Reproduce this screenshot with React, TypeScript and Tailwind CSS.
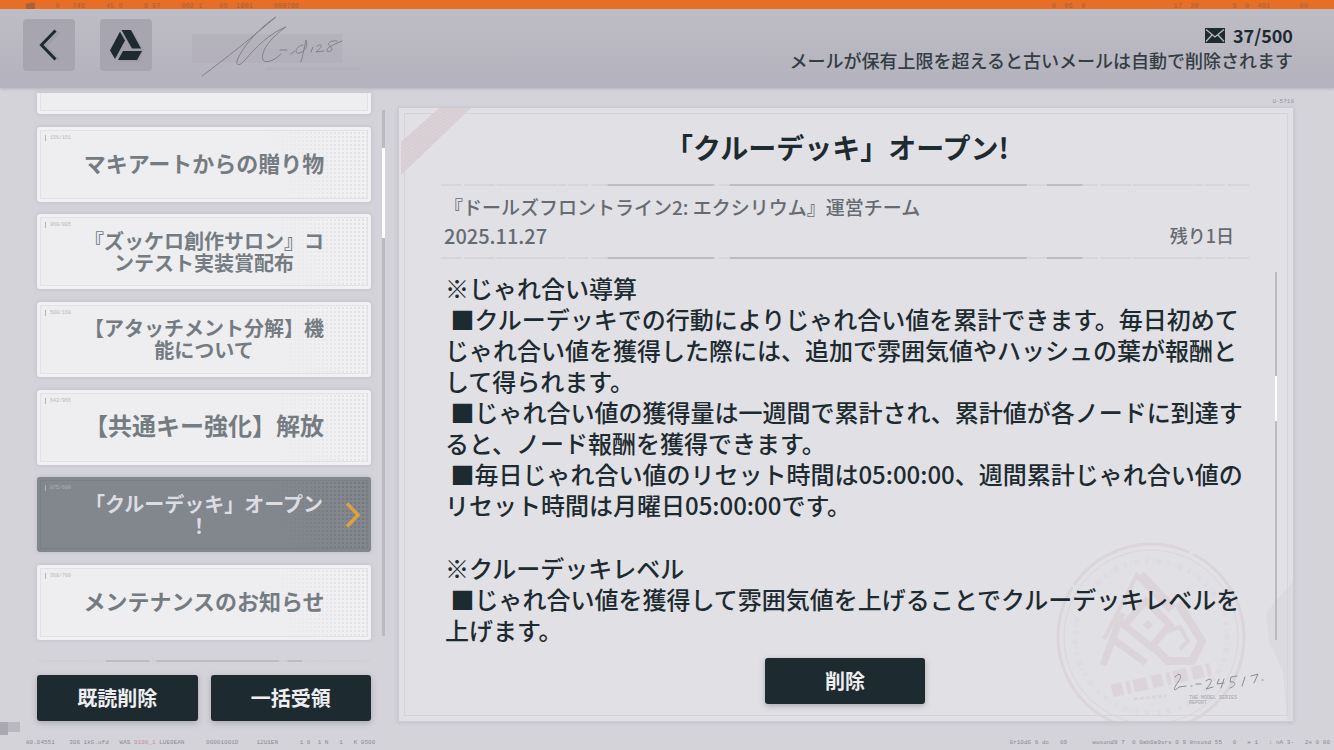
import React from 'react';
import { clsx } from 'clsx';

const SC = "font-['Noto_Sans_CJK_SC',sans-serif]";

const mails = [
  { code: '156/151', title: 'マキアートからの贈り物', size: 'text-[22px] pb-1' },
  { code: '960/005', title: '『ズッケロ創作サロン』コンテスト実装賞配布', size: 'text-[20px]' },
  { code: '500/168', title: '【アタッチメント分解】機能について', size: 'text-[20px]' },
  { code: '642/966', title: '【共通キー強化】解放', size: 'text-[24px] pb-1' },
  { code: '875/600', title: <>「クルーデッキ」オープン<span className={SC}>！</span></>, size: 'text-[20px]', active: true },
  { code: '360/700', title: 'メンテナンスのお知らせ', size: 'text-[22px] pb-1' },
];

const sections = [
  [
    '※じゃれ合い導算',
    ' ■クルーデッキでの行動によりじゃれ合い値を累計できます。毎日初めてじゃれ合い値を獲得した際には、追加で雰囲気値やハッシュの葉が報酬として得られます。',
    ' ■じゃれ合い値の獲得量は一週間で累計され、累計値が各ノードに到達すると、ノード報酬を獲得できます。',
    ' ■毎日じゃれ合い値のリセット時間は05:00:00、週間累計じゃれ合い値のリセット時間は月曜日05:00:00です。',
  ],
  [
    '※クルーデッキレベル',
    ' ■じゃれ合い値を獲得して雰囲気値を上げることでクルーデッキレベルを上げます。',
  ],
];

function BackIcon() {
  return (
    <svg viewBox="0 0 52 52" className="h-full w-full" fill="none">
      <path d="M36 13 23 27 36 41" stroke="#8f8e98" strokeWidth="3" opacity=".35" />
      <path d="M32.500 11.500 18.500 26 32.500 40.500" stroke="#1d2b30" strokeWidth="3" />
    </svg>
  );
}

function BaseIcon() {
  return (
    <svg viewBox="0 0 52 52" className="h-full w-full">
      <path d="M24 13H33L44 31 39 43H20L13 33Z" fill="#8f8e98" opacity=".35" />
      <g fill="#1d2b30">
        <path d="M21.500 11H31L41 29.500H32Z" />
        <path d="M20 12.500 25 21.500 15 40 10 31.500Z" />
        <path d="M23 32H42L37 41H18Z" />
      </g>
    </svg>
  );
}

function MailIcon() {
  return (
    <svg viewBox="0 0 20 15" className="h-[15px] w-5">
      <rect width="20" height="15" fill="#1d2b30" />
      <path d="M1 1.500 10 9 19 1.500M1 13.500 7 7M19 13.500 13 7" fill="none" stroke="#bbb9c3" strokeWidth="1.300" />
    </svg>
  );
}

function HeaderSignature() {
  return (
    <svg viewBox="0 0 170 80" className="h-20 w-[170px]" fill="none" stroke="#82818b" strokeWidth="1" strokeLinecap="round">
      <rect x="2" y="25" width="150" height="29" fill="#a9a7b1" stroke="none" opacity=".35" />
      <path d="M77 60H170" stroke="#a9a7b1" strokeWidth="3" opacity=".35" />
      <path d="M12 67C34 51 66 25 86 8C67 20 50 42 47 52C46 58 51 56 55 51C66 38 80 24 96 18C80 29 70 43 73 51C77 56 87 49 91 45" />
      <path d="M90 41 97 41M101 45 105 42M113 36C105 37 104 46 110 44C116 42 118 35 116 31C114 40 112 50 111 53M123 38 121 43M127 37C132 34 134 37 126 43L134 42M147 32C140 31 136 35 140 37C144 40 141 44 137 42C135 39 145 35 152 32" />
    </svg>
  );
}

function Stamp() {
  return (
    <svg viewBox="0 0 210 190" className="absolute right-[35px] -bottom-1 h-[190px] w-[210px]" fill="none">
      <g stroke="#dbd5da">
        <circle cx="103" cy="102" r="93" strokeWidth="3" strokeDasharray="130 4 210 3" />
        <circle cx="103" cy="102" r="87" strokeWidth="1" />
        <circle cx="103" cy="102" r="76" strokeWidth="5" strokeDasharray="3 4 1 3 5 6" opacity=".35" />
        <path d="M90 38 56 104" strokeWidth="4" />
        <path d="M92 40 124 74" strokeWidth="10" />
        <path d="M74 78 55 130M62 102 98 128" strokeWidth="7" />
        <path d="M98 66 122 90 103 112 76 90Z" strokeWidth="7" />
        <path d="M130 68 154 106 144 126 120 126 106 112" strokeWidth="8" />
        <path d="M120 96 132 92 140 106 132 114" strokeWidth="4" />
      </g>
      <path d="M95 90 100 85 105 90 100 95Z" fill="#dbd5da" />
      <path d="M64 156 164 134" stroke="#dbd5da" strokeWidth="13" strokeDasharray="11 4 4 3 14 5" />
      <path d="M86 164 118 161" stroke="#dbd5da" strokeWidth="3" strokeDasharray="4 2" />
    </svg>
  );
}

function ReportSignature() {
  return (
    <svg viewBox="0 0 96 24" className="h-6 w-24" fill="none" stroke="#8c8b93" strokeWidth="1" strokeLinecap="round">
      <path d="M4 6C9 0 12 5 7 11C2 18 2 22 8 16L15 15M20 15H21M25 13H30M35 10C41 5 43 10 35 18L42 16M48 8 46 13 53 12M53 8 50 17M66 5 60 6 59 11C66 10 65 15 59 17M74 6 71 15M80 5 87 3 83 12M91 9H92" />
    </svg>
  );
}

// worn hairline: the same uneven dashes are used above and below the sender
function Rule({ className }: { className?: string }) {
  return (
    <svg viewBox="0 0 800 2" preserveAspectRatio="none" className={clsx('block h-[2px] w-full shrink-0', className)}>
      <path d="M0 1H800" stroke="#cbcad0" strokeWidth="1" strokeDasharray="20 3 30 2 60 1 8 2" />
      <path d="M165 1H270M286 1H580M600 1H635" stroke="#bdbcc3" strokeWidth="2" />
    </svg>
  );
}

function Micro({ children, className }: { children: React.ReactNode; className?: string }) {
  return (
    <span className={clsx("font-['Liberation_Mono',monospace] whitespace-pre", className)}>{children}</span>
  );
}

function CardTexture({ active }: { active?: boolean }) {
  return (
    <span
      className={clsx(
        'absolute inset-[3px] border [background-size:100%_100%,4px_4px]',
        active
          ? 'border-[#7b7f86] bg-[linear-gradient(75deg,#82868d_70%,transparent),radial-gradient(#72767c_0.8px,transparent_1px)]'
          : 'border-[#e2e2e6] bg-[linear-gradient(75deg,#eeeef1_70%,transparent),radial-gradient(#e0e0e3_0.8px,transparent_1px)]'
      )}
    />
  );
}

function MailCard({ mail }: { mail: (typeof mails)[number] }) {
  return (
    <li className="h-[75px] shrink-0">
      <button
        type="button"
        aria-current={mail.active}
        className={clsx(
          'relative flex h-full w-full items-center justify-center rounded-[3px] shadow-[0_0_5px_#bcbbc3]',
          mail.active ? 'bg-[#82868d] text-[#dcdde1]' : 'bg-[#f1f1f3] text-[#757c81]'
        )}
      >
        <CardTexture active={mail.active} />
        <Micro className="absolute top-2 left-2 border-l border-current pl-1 text-[5px] leading-[6px] opacity-50">{mail.code}</Micro>
        <span className={clsx('relative w-[244px] text-center leading-[22px] font-bold [line-break:anywhere]', mail.size)}>
          {mail.title}
        </span>
        {mail.active && (
          <svg viewBox="0 0 16 26" className="absolute right-[10px] h-[26px] w-4" fill="none">
            <path d="M2 1.500 13 13 2 24.500" stroke="#e0a040" strokeWidth="3.500" />
          </svg>
        )}
      </button>
    </li>
  );
}

function DarkButton({ children, className }: { children: React.ReactNode; className?: string }) {
  return (
    <button
      type="button"
      className={clsx('h-[46px] shrink-0 rounded-[3px] bg-[#1d2b30] text-[20px] font-bold text-[#eeeef1] shadow-[0_2px_6px_#a9a8b0]', className)}
    >
      {children}
    </button>
  );
}

export default function App() {
  return (
    <div className="relative flex min-h-screen flex-col bg-[#d4d3da] font-['Noto_Sans_CJK_JP',sans-serif] font-medium text-[#1d2b30]">
      <header className="bg-linear-to-b from-[#bfbdc6] to-[#b4b2bc] shadow-[0_1px_3px_#b4b2bc]">
        <div className="flex h-[9px] justify-between overflow-hidden bg-[#e66e26] px-[26px] text-[7px] leading-[12px] text-[#b05f30]">
          <Micro>{'▆▇     0   746     45 0     9 57     002 1    06  1901     000760'}</Micro>
          <Micro>{'0  06  0                     17  20        9  0  401       00'}</Micro>
        </div>
        <div className="flex h-[79px] items-start justify-between pr-[41px] pl-[23px]">
          <div className="flex">
            <button type="button" aria-label="戻る" className="mt-[10px] h-[52px] w-[52px] rounded-[4px] bg-[#a7a5af]">
              <BackIcon />
            </button>
            <button type="button" aria-label="拠点" className="mt-[10px] ml-[25px] h-[52px] w-[52px] rounded-[4px] bg-[#a7a5af]">
              <BaseIcon />
            </button>
            <div className="ml-[38px]">
              <HeaderSignature />
            </div>
          </div>
          <div className="pt-[13px] text-right">
            <p className="flex items-center justify-end gap-2 text-[18px] leading-[26px] font-bold">
              <MailIcon />
              37/500
            </p>
            <p className="text-[18px] leading-[24px] text-[#343d44]">メールが保有上限を超えると古いメールは自動で削除されます</p>
          </div>
        </div>
      </header>

      <main className="flex flex-1 pr-10 pl-[37px]">
        <nav className="flex w-[334px] flex-col pt-[5px] pb-px">
          <ul className="flex flex-1 flex-col justify-between">
            <li className="relative h-[21px] rounded-b-[3px] bg-[#f1f1f3] shadow-[0_0_5px_#bcbbc3]">
              <span className="absolute inset-x-[3px] top-0 bottom-[3px] border border-t-0 border-[#e2e2e6] bg-[#eeeef1]" />
            </li>
            {mails.map((m) => (
              <MailCard key={m.code} mail={m} />
            ))}
          </ul>
          <Rule className="mt-5" />
          <div className="mt-[13px] grid grid-cols-2 gap-[13px]">
            <DarkButton>既読削除</DarkButton>
            <DarkButton>一括受領</DarkButton>
          </div>
        </nav>

        <div className="mt-[22px] mb-[86px] ml-[11px] w-[3px] bg-[#bbbac1]">
          <div className="mt-[38px] h-[90px] bg-white" />
        </div>

        <div className="ml-[13px] flex min-w-0 flex-1 flex-col">
          <Micro className="h-[19px] pt-[10px] text-right text-[6px] leading-[7px] text-[#96959d]">U-5710</Micro>
          <article className="relative flex flex-1 flex-col overflow-hidden border border-[#cccbd1] bg-[#e1e0e5] pr-[44px] pl-[42px] shadow-[0_1px_4px_#c0bfc6]">
            <div className="pointer-events-none absolute inset-[5px] border border-[#d4d3d9]" />
            <svg viewBox="0 0 80 70" className="absolute top-0 left-0 h-[70px] w-20">
              <defs>
                <pattern id="tape" width="3" height="3" patternUnits="userSpaceOnUse" patternTransform="rotate(-28)">
                  <rect width="3" height="3" fill="#dbd4d9" />
                  <path d="M0 1H3" stroke="#d3c6cc" strokeWidth="1" />
                </pattern>
              </defs>
              <path d="M40 0H72L2 67V34Z" fill="url(#tape)" />
            </svg>
            <svg viewBox="0 0 30 140" className="absolute right-0 bottom-0 h-[140px] w-[30px]">
              <path d="M30 0 3 32 6 60 20 90 24 140H30Z" fill="#d6d5da" opacity=".6" />
            </svg>
            <Stamp />
            <div className="absolute right-[26px] bottom-[15px] flex flex-col items-start">
              <ReportSignature />
              <Micro className="pt-px pl-[18px] text-[5px] leading-[5px] text-[#a5a4ab]">{'THE MODEL SERIES\nREPORT'}</Micro>
            </div>
            <h1 className="relative pt-[18px] pr-4 text-center text-[28px] leading-[42px] font-bold">「クルーデッキ」オープン!</h1>
            <Rule className="mt-4" />
            <div className="relative pt-[6px] pr-[15px] pl-[3px] text-[#666b71]">
              <p className="text-[19px] leading-[29px]">『ドールズフロントライン2: エクシリウム』運営チーム</p>
              <div className="flex justify-between leading-[29px]">
                <time dateTime="2025-11-27" className="text-[20px]">2025.11.27</time>
                <span className="text-[18px]">残り1日</span>
              </div>
            </div>
            <Rule className="mt-[7px]" />
            <div className="relative mt-[13px] -mr-[28px] flex flex-1">
              <div className="flex-1 space-y-[32px] pr-[26px] pl-1 text-[24px] leading-[31px] whitespace-pre-wrap [line-break:anywhere]">
                {sections.map((lines, i) => (
                  <div key={i}>
                    {lines.map((line) => (
                      <p key={line}>{line}</p>
                    ))}
                  </div>
                ))}
              </div>
              <div className="mb-2 w-[2px] bg-[#bbbac1]">
                <div className="mt-[104px] h-[45px] bg-white" />
              </div>
            </div>
            <DarkButton className="relative mt-[10px] mb-[17px] w-40 self-center">削除</DarkButton>
          </article>
        </div>
      </main>

      <div className="absolute bottom-[15px] left-0 flex">
        <div className="h-[13px] w-2 bg-[#a9a8b0]" />
        <div className="h-[10px] w-3 bg-[#b9b8bf]" />
      </div>
      <footer className="flex h-[28px] shrink-0 items-end justify-between pr-1 pb-[3px] pl-[26px] text-[6px] leading-[8px] text-[#8b8a92]">
        <Micro>{'80.04551    306 1kG.ufd   WAS '}<span className="text-[#c08f97]">9190_1</span>{' LUE0EAN      00001001D     12U1EN      1 0  1 N   1   K 0500'}</Micro>
        <Micro>{'0r10dG 6 dc   09       wosond9 7  0 0ab0a9srs 0 9 8nsosd 55   0   e 1   : nA 3-   2e 0 00'}</Micro>
      </footer>
    </div>
  );
}
